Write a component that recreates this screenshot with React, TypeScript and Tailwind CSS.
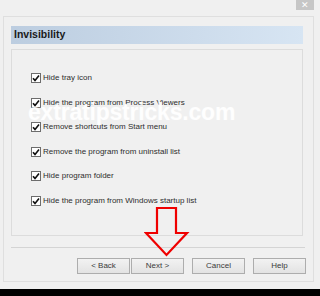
import React from "react";

const OPTIONS = [
  "Hide tray icon",
  "Hide the program from Process Viewers",
  "Remove shortcuts from Start menu",
  "Remove the program from uninstall list",
  "Hide program folder",
  "Hide the program from Windows startup list",
];

function Check() {
  return (
    <span className="flex h-[10px] w-[10px] shrink-0 items-center justify-center border border-[#6d6d6d] bg-white">
      <svg width="8" height="8" viewBox="0 0 8 8">
        <path d="M1 4.2 L3 6.4 L7 1.4" fill="none" stroke="#111" strokeWidth="1.6" />
      </svg>
    </span>
  );
}

function Btn({ label }: { label: string }) {
  return (
    <button
      type="button"
      className="flex h-[16px] w-[53px] items-center justify-center border border-[#adadad] bg-gradient-to-b from-[#f2f2f2] to-[#e3e3e3] text-[8px] text-[#3a3a3a]"
    >
      {label}
    </button>
  );
}

export default function App() {
  return (
    <div
      className="relative h-[296px] w-[320px] overflow-hidden bg-[#f0f0f0]"
      style={{ fontFamily: '"Liberation Sans", Arial, sans-serif' }}
    >
      <div className="flex h-[16px] justify-end pr-[6px]">
        <div className="flex h-[10px] w-[18px] items-center justify-center bg-[#c6c6c6] text-[9px] leading-none text-white">
          ✕
        </div>
      </div>

      <div className="ml-[3px] flex h-[266px] w-[311px] flex-col border border-[#dfdfdf] pl-[7px] pt-[9px]">
        <div className="flex h-[18px] w-[292px] items-center bg-gradient-to-r from-[#bccde0] to-[#d7e5f3] pl-[3px] text-[10.5px] font-bold text-[#1a1a1a]">
          Invisibility
        </div>

        <div className="mt-[5px] flex h-[187px] w-[292px] flex-col gap-[12.6px] border border-[#dcdcdc] pl-[19px] pt-[22px]">
          {OPTIONS.map((o) => (
            <div key={o} className="flex h-[12px] items-center gap-[2px] text-[8px] text-[#2e2e2e]">
              <Check />
              <span>{o}</span>
            </div>
          ))}
        </div>

        <div className="mt-[11px] h-[2px] w-[294px] border-t border-[#d4d4d4] border-b-white" />

        <div className="mt-[9px] flex w-[295px] justify-end">
          <div className="flex">
            <Btn label="< Back" />
            <span className="ml-px" />
            <Btn label="Next >" />
          </div>
          <span className="ml-[8px]" />
          <Btn label="Cancel" />
          <span className="ml-[8px]" />
          <Btn label="Help" />
        </div>
      </div>

      <div className="mt-[7px] h-[7px] bg-black" />

      {/* watermark overlay */}
      <div className="absolute left-[28px] top-[101px] text-[23px] font-bold leading-none tracking-[-0.2px] text-white/90">
        extratipstricks.com
      </div>

      {/* red arrow */}
      <svg className="absolute left-[144px] top-[206px]" width="46" height="52" viewBox="0 0 46 52">
        <path
          d="M13 2 H32 V27 H43 L22.5 49 L2 27 H13 Z"
          fill="none"
          stroke="#ef0000"
          strokeWidth="2.2"
          strokeLinejoin="miter"
        />
      </svg>
    </div>
  );
}
